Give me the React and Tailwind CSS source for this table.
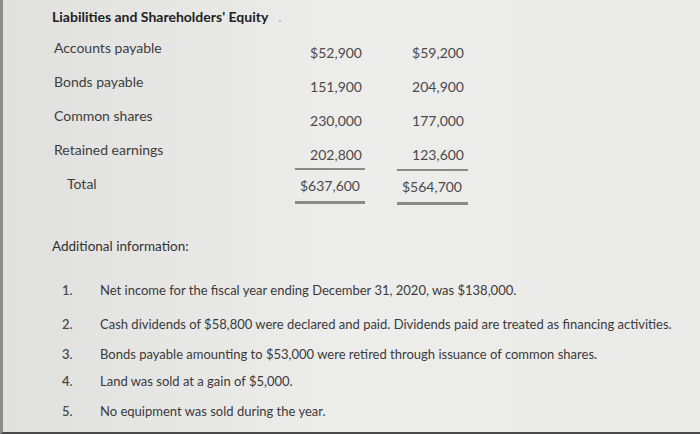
const rows = [
  { label: "Accounts payable", a: "$52,900", b: "$59,200" },
  { label: "Bonds payable", a: "151,900", b: "204,900" },
  { label: "Common shares", a: "230,000", b: "177,000" },
  { label: "Retained earnings", a: "202,800", b: "123,600" },
];

const notes = [
  { n: "1.", text: "Net income for the fiscal year ending December 31, 2020, was $138,000.", h: "h-[36px]" },
  { n: "2.", text: "Cash dividends of $58,800 were declared and paid. Dividends paid are treated as financing activities.", h: "h-[32px]" },
  { n: "3.", text: "Bonds payable amounting to $53,000 were retired through issuance of common shares.", h: "h-[28px]" },
  { n: "4.", text: "Land was sold at a gain of $5,000.", h: "h-[26px]" },
  { n: "5.", text: "No equipment was sold during the year.", h: "h-[34px]" },
];

export default function App() {
  return (
    <div className="w-[700px] h-[434px] overflow-hidden border-l-[3px] border-l-[#8d8d8b] border-b-[2px] border-b-[#4a4a4a] bg-gradient-to-r from-[#e0e0de] via-[#ededeb] to-[#eaeae8] font-['Lato','Liberation_Sans',sans-serif] text-[#3d3d3d]">
      <div className="pl-[49px]">
        <div className="h-[20px] mt-[6px] flex items-center text-[14px] font-bold text-[#222]">
          Liabilities and Shareholders' Equity
          <span className="ml-[10px] text-[#aaa] font-normal">.</span>
        </div>

        <div className="mt-[4px]">
          {rows.map((r) => (
            <div key={r.label} className="flex h-[34px]">
              <div className="w-[243px] pl-[2px] flex items-center text-[14px]">{r.label}</div>
              <div className="w-[70px] pr-[3px] pt-[10px] flex items-center justify-end text-[14px] text-[#4a4a4a]">{r.a}</div>
              <div className="w-[71px] ml-[32px] pr-[4px] pt-[10px] flex items-center justify-end text-[14px] text-[#4a4a4a]">{r.b}</div>
            </div>
          ))}
          <div className="flex h-[40px]">
            <div className="w-[243px] pl-[15px] flex items-center text-[14px] h-[34px]">Total</div>
            <div className="w-[70px] mt-[2px] h-[36px] border-t-[2px] border-t-[#8a8a8a] border-b-[3px] border-b-[#8a8a8a] pr-[5px] flex items-center justify-end text-[14px] text-[#4a4a4a]">$637,600</div>
            <div className="w-[71px] ml-[32px] mt-[3px] h-[36px] border-t-[2px] border-t-[#8a8a8a] border-b-[3px] border-b-[#8a8a8a] pr-[6px] flex items-center justify-end text-[14px] text-[#4a4a4a]">$564,700</div>
          </div>
        </div>

        <div className="mt-[30px] h-[20px] flex items-center text-[13.5px] text-[#333]">Additional information:</div>

        <div className="mt-[17px]">
          {notes.map((item) => (
            <div key={item.n} className={`flex items-center ${item.h} text-[13px] text-[#3a3a3a]`}>
              <span className="w-[48px] pl-[10px] font-semibold text-[#4a4a4a]">{item.n}</span>
              <span>{item.text}</span>
            </div>
          ))}
        </div>
      </div>
    </div>
  );
}
